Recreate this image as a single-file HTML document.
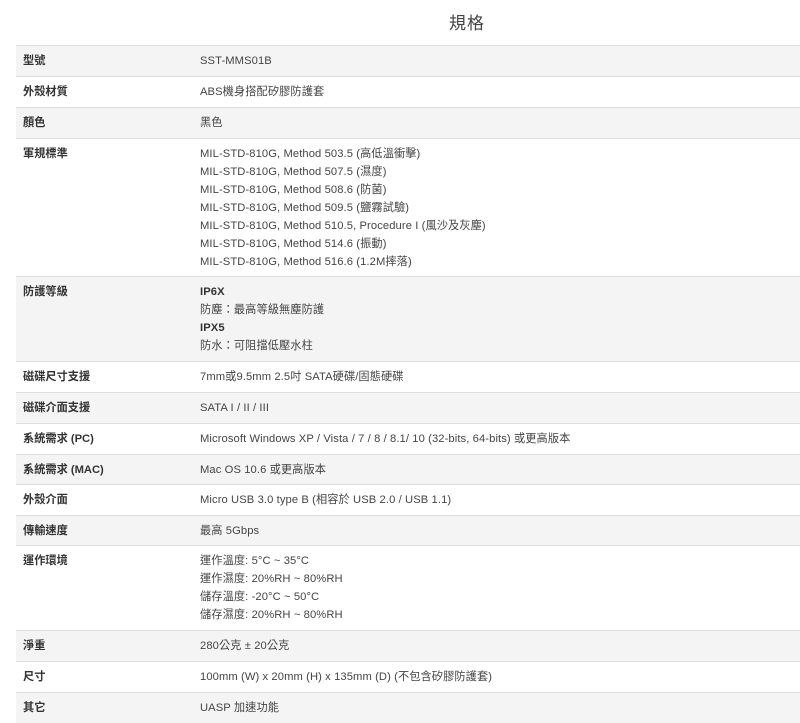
<!DOCTYPE html>
<html><head><meta charset="utf-8"><style>
body{margin:0;background:#fff;width:800px;height:721px;overflow:hidden;font-family:"Liberation Sans","Noto Sans CJK TC",sans-serif;color:#333;font-size:11.2px}
h1{position:absolute;left:0;top:9px;width:934px;text-align:center;font-weight:normal;font-size:17px;margin:0;color:#444;letter-spacing:1px}
.t{position:absolute;left:16px;top:45px;width:784px}
.r{position:relative;border-top:1px solid #dedede;box-sizing:border-box;line-height:18px;padding-top:6px}
.r:nth-child(odd){background:#f4f4f4}
.l{position:absolute;left:7px;top:6px;font-weight:bold;color:#333}
.v{margin-left:184px;color:#444;letter-spacing:0.1px}
b{color:#333}
</style></head><body>
<h1>規格</h1>
<div class="t">
<div class="r" style="height:31px"><span class="l">型號</span><div class="v">SST-MMS01B</div></div>
<div class="r" style="height:31px"><span class="l">外殼材質</span><div class="v">ABS機身搭配矽膠防護套</div></div>
<div class="r" style="height:31px"><span class="l">顏色</span><div class="v">黑色</div></div>
<div class="r" style="height:138px"><span class="l">軍規標準</span><div class="v">MIL-STD-810G, Method 503.5 (高低溫衝擊)<br>MIL-STD-810G, Method 507.5 (濕度)<br>MIL-STD-810G, Method 508.6 (防菌)<br>MIL-STD-810G, Method 509.5 (鹽霧試驗)<br>MIL-STD-810G, Method 510.5, Procedure I (風沙及灰塵)<br>MIL-STD-810G, Method 514.6 (振動)<br>MIL-STD-810G, Method 516.6 (1.2M摔落)</div></div>
<div class="r" style="height:85px"><span class="l">防護等級</span><div class="v"><b>IP6X</b><br>防塵：最高等級無塵防護<br><b>IPX5</b><br>防水：可阻擋低壓水柱</div></div>
<div class="r" style="height:31px"><span class="l">磁碟尺寸支援</span><div class="v">7mm或9.5mm 2.5吋 SATA硬碟/固態硬碟</div></div>
<div class="r" style="height:31px"><span class="l">磁碟介面支援</span><div class="v">SATA I / II / III</div></div>
<div class="r" style="height:31px"><span class="l">系統需求 (PC)</span><div class="v">Microsoft Windows XP / Vista / 7 / 8 / 8.1/ 10 (32-bits, 64-bits) 或更高版本</div></div>
<div class="r" style="height:30px"><span class="l">系統需求 (MAC)</span><div class="v">Mac OS 10.6 或更高版本</div></div>
<div class="r" style="height:31px"><span class="l">外殼介面</span><div class="v">Micro USB 3.0 type B (相容於 USB 2.0 / USB 1.1)</div></div>
<div class="r" style="height:30px"><span class="l">傳輸速度</span><div class="v">最高 5Gbps</div></div>
<div class="r" style="height:85px"><span class="l">運作環境</span><div class="v">運作溫度: 5°C ~ 35°C<br>運作濕度: 20%RH ~ 80%RH<br>儲存溫度: -20°C ~ 50°C<br>儲存濕度: 20%RH ~ 80%RH</div></div>
<div class="r" style="height:31px"><span class="l">淨重</span><div class="v">280公克 ± 20公克</div></div>
<div class="r" style="height:31px"><span class="l">尺寸</span><div class="v">100mm (W) x 20mm (H) x 135mm (D) (不包含矽膠防護套)</div></div>
<div class="r" style="height:31px"><span class="l">其它</span><div class="v">UASP 加速功能</div></div>
</div>
</body></html>
